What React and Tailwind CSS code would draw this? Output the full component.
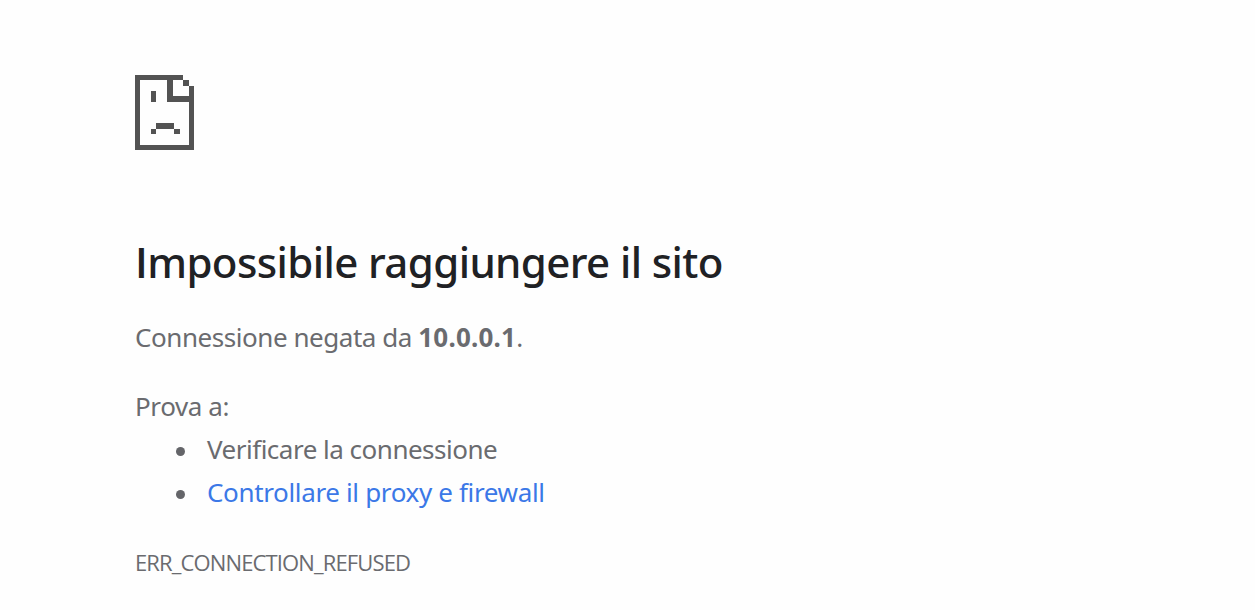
import React from 'react';

const suggestions = [
  { text: 'Verificare la connessione', spacing: 'tracking-[-0.5px]' },
  { text: 'Controllare il proxy e firewall', spacing: 'tracking-[-0.35px]', link: true },
];

function SadPageIcon() {
  return (
    <svg
      className="block w-[59px] h-[75px] text-[#535353]"
      viewBox="0 0 11 14"
      preserveAspectRatio="none"
      fill="currentColor"
      shapeRendering="crispEdges"
    >
      {/* Sheet outline */}
      <path d="M0 0H9V1H1V13H10V2H11V14H0Z" />
      {/* Folded corner */}
      <path d="M6 1H7V4H10V5H6Z" />
      <path d="M9 1H10V2H9Z" />
      {/* Face */}
      <path d="M3 3H4V5H3Z" />
      <path d="M4 9H7.3V10H4Z" />
      <path d="M3 10H4V11H3ZM7.3 10H8.3V11H7.3Z" />
    </svg>
  );
}

export default function App() {
  return (
    <main className="min-h-screen bg-[#fefefe] pl-[135px] pt-[75px] font-['Noto_Sans','Open_Sans',sans-serif] text-[26px] leading-[43px] text-[#6a6b6f] whitespace-nowrap">
      <SadPageIcon />

      <h1 className="mt-[85px] text-[42px] leading-[54px] font-medium tracking-[-0.6px] text-[#202124]">
        {/* Open Sans has the plain capital I */}
        <span className="font-['Open_Sans'] font-semibold">I</span>mpossibile raggiungere il sito
      </h1>

      <p className="mt-[27px] tracking-[-0.45px]">
        Connessione negata da <strong className="font-bold tracking-[0.2px]">10.0.0.1</strong>.
      </p>

      <div className="mt-[26px]">
        <p className="tracking-[-0.4px]">Prova a:</p>
        <ul>
          {suggestions.map((item) => (
            <li key={item.text} className="flex items-center pl-[41px]">
              <span className="mt-[3px] mr-[22px] size-[9px] rounded-full bg-[#646569]" />
              {item.link ? (
                <a href="#" className={`text-[#3b78e7] ${item.spacing}`}>{item.text}</a>
              ) : (
                <span className={item.spacing}>{item.text}</span>
              )}
            </li>
          ))}
        </ul>
      </div>

      <div className="mt-[30px] font-['Open_Sans',sans-serif] text-[22px] leading-[36px] tracking-[-0.87px]">
        ERR_CONNECTION_REFUSED
      </div>
    </main>
  );
}
